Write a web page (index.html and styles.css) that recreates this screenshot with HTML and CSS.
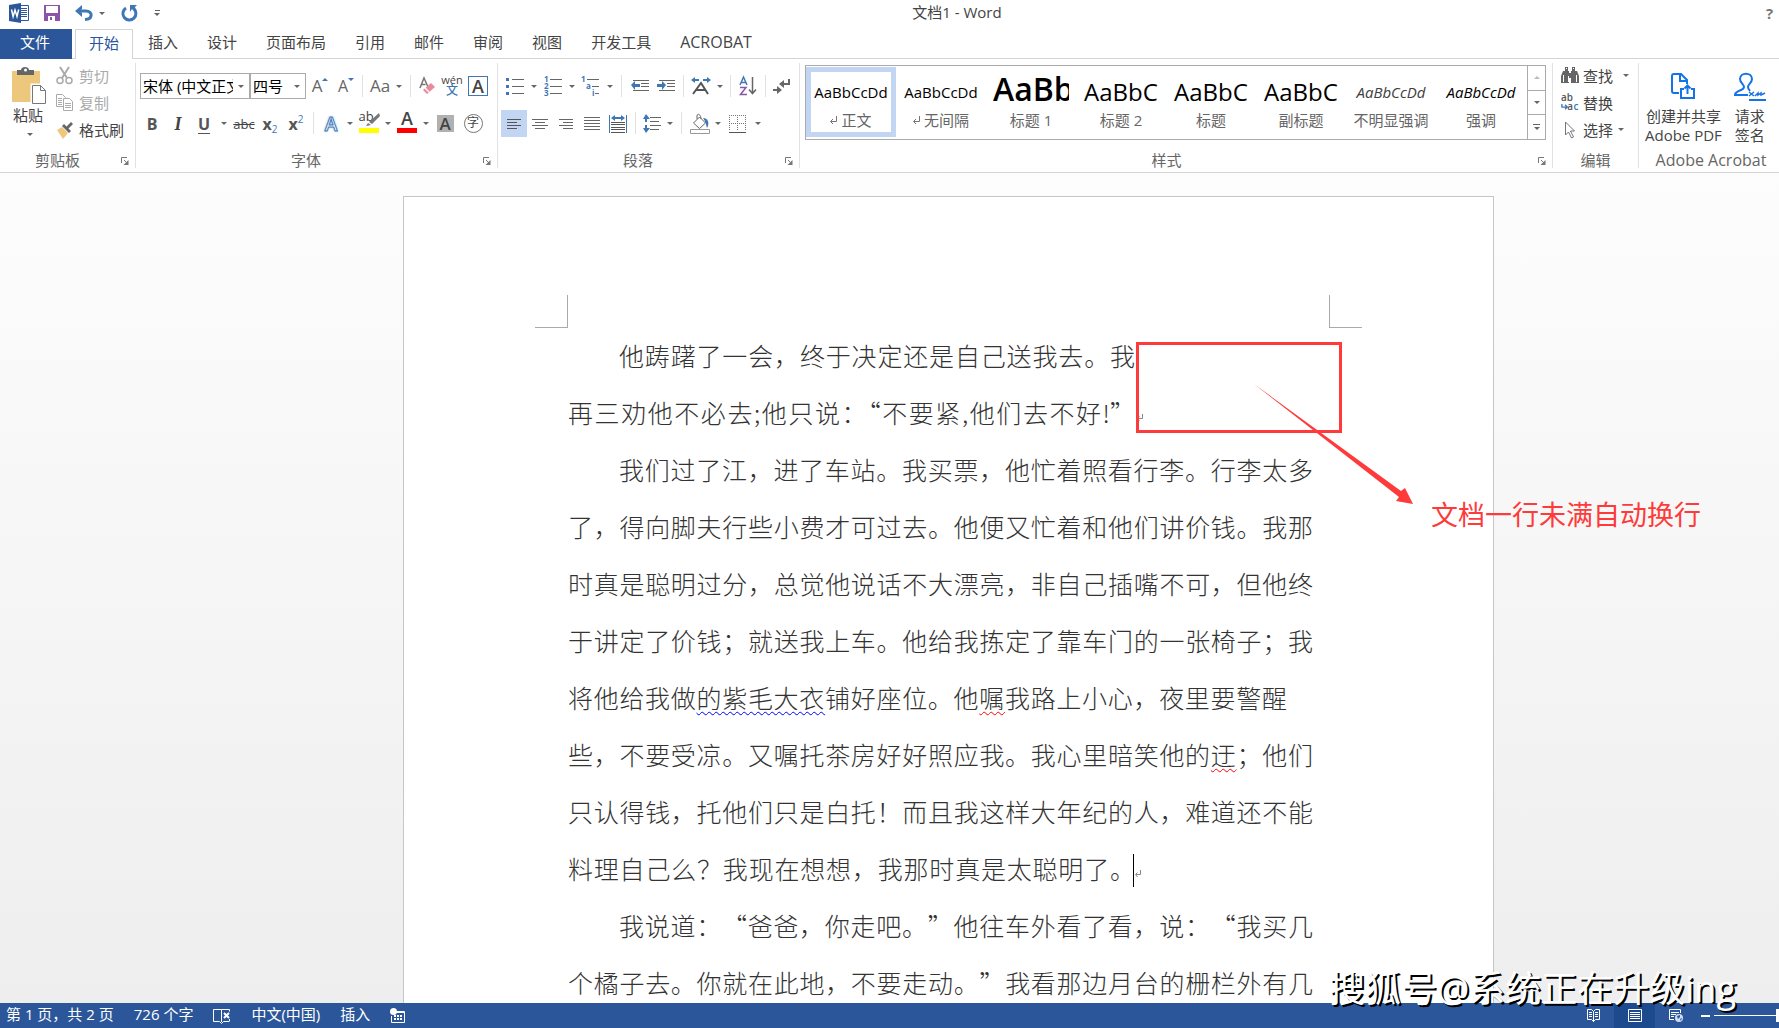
FILE: index.html
```html
<!DOCTYPE html>
<html lang="zh-CN">
<head>
<meta charset="utf-8">
<title>文档1 - Word</title>
<link rel="stylesheet" href="styles.css">
</head>
<body>
<header class="titlebar">
  <div class="quick">
    <svg class="word-logo" width="20" height="20" viewBox="0 0 20 20"><path fill="#fff" stroke="#2b579a" d="M10 2.500h9.500v15H10z"/><path stroke="#2b579a" d="M12 5.500h6M12 7.500h6M12 9.500h6M12 11.500h6M12 13.500h6"/><path fill="#2b579a" d="M0 2 12 0v20L0 18z"/><path fill="none" stroke="#fff" stroke-width="1.500" d="m2.500 6.500 1.600 7L6 7l2 6.500 1.700-7"/></svg>
    <button class="plain" aria-label="保存"><svg width="16" height="16" viewBox="0 0 16 16"><path fill="#8a55a8" d="M0 0h16v16H0z"/><path fill="#fff" d="M2 1h12v7H2zM4 11h8v5H4z"/><path fill="#8a55a8" d="M6 12h2v3H6zM11 11h1v5h-1z"/></svg></button>
    <button class="plain" aria-label="撤消"><svg width="18" height="17" viewBox="0 0 18 17"><path fill="none" stroke="#3f77b5" stroke-width="3" d="M3 6h8c7 0 7 8-1 8.500"/><path fill="#3f77b5" d="M0 6 7 0v4L5 6l2 2v4z"/></svg></button>
    <i class="arrow"></i>
    <button class="plain redo" aria-label="重复"><svg width="17" height="17" viewBox="0 0 17 17"><path fill="none" stroke="#3f77b5" stroke-width="3" d="M5 3A6.500 6.500 0 1 0 12.500 3.500"/><path fill="#3f77b5" d="M9 0h7l-2 2 1 4h-2L11 4 9 7z"/></svg></button>
    <svg width="7" height="7" viewBox="0 0 7 7"><path stroke="#666" d="M1 .500h5"/><path fill="#666" d="M0 3h6L3 6z"/></svg>
  </div>
  <h1>文档1 - Word</h1>
  <button class="plain help" aria-label="帮助">?</button>
</header>

<nav class="tabs">
  <button class="file">文件</button>
  <button class="active">开始</button>
  <button>插入</button>
  <button>设计</button>
  <button>页面布局</button>
  <button>引用</button>
  <button>邮件</button>
  <button>审阅</button>
  <button>视图</button>
  <button>开发工具</button>
  <button class="latin">ACROBAT</button>
</nav>

<section class="ribbon">
  <div class="group clipboard">
    <div class="clip-body">
      <button class="paste">
        <svg width="36" height="38" viewBox="0 0 36 38"><path fill="#edc77c" d="M0 4h28v31H0z"/><path fill="#666" d="M5 3h4c0-4 8-4 8 0h5v5H5z"/><circle cx="13.500" cy="3" r="1.500" fill="#fff"/><path fill="#fff" stroke="#fff" stroke-width="3" d="M20 18h9l5 5v14H20z"/><path fill="#fff" stroke="#777" d="M20.500 18.500h8l5 5v13h-13z"/><path fill="none" stroke="#777" d="M28.500 18.500v5h5"/></svg>
        <span>粘贴</span><i class="arrow"></i>
      </button>
      <div class="stack">
        <button class="off"><svg width="18" height="18" viewBox="0 0 18 18"><g fill="none" stroke="#aaa" stroke-width="1.500"><circle cx="4" cy="13.500" r="3"/><circle cx="13" cy="13.500" r="3"/><path stroke-width="2" d="m4 0 7 11M13 0 6 11"/></g></svg>剪切</button>
        <button class="off"><svg width="18" height="18" viewBox="0 0 18 18"><g fill="#fff" stroke="#aaa"><path d="M.500.500h6l3 3v9h-9z"/><path d="M2 4.500h4M2 6.500h4M2 8.500h4M2 10.500h4"/><path d="M7.500 4.500h6l3 3v9h-9z"/><path d="M9 9.500h6M9 11.500h6M9 13.500h6"/></g></svg>复制</button>
        <button><svg width="18" height="18" viewBox="0 0 18 18"><path fill="#edc77c" d="m1 9 5-3 6 6-5 6z"/><path fill="#666" d="m6 5 2-2 2.500 2.500L15 1l2 2-4.500 4.500L15 10l-2 2z"/></svg>格式刷</button>
      </div>
    </div>
    <footer><span>剪贴板</span><svg class="launcher" width="8" height="8" viewBox="0 0 8 8"><path fill="none" stroke="#777" d="M.500 6V.500H6M3 3l3 3"/><path fill="#777" d="M7.500 3v5h-5z"/></svg></footer>
  </div>

  <div class="group font">
    <div class="row first">
      <div class="combo w110"><select aria-label="字体"><option>宋体 (中文正文)</option></select><i class="arrow"></i></div>
      <div class="combo w56"><select aria-label="字号"><option>四号</option></select><i class="arrow"></i></div>
      <button class="w28 grow">A<svg width="6" height="4" viewBox="0 0 6 4"><path fill="#3f77b5" d="M3 0l3 3H0z"/></svg></button>
      <button class="w24 grow small">A<svg width="6" height="4" viewBox="0 0 6 4"><path fill="#3f77b5" d="M0 0h6L3 3z"/></svg></button>
      <i class="sep w8"></i>
      <button class="w28 case">Aa</button><i class="arrow w10"></i>
      <i class="sep w12"></i>
      <button class="w24" aria-label="清除格式"><svg width="18" height="20" viewBox="0 0 18 20"><path fill="none" stroke="#777" stroke-width="1.500" d="M1 12 5 2l4 9M2.500 8.500h4"/><path fill="#e98a98" d="m4 14 8-7 4 4-8 7z"/><path fill="#fff" d="m6.500 11.500 4 4 -1 1-4-4z"/></svg></button>
      <button class="w24 pinyin"><small>wén</small><b>文</b></button>
      <button class="w28"><span class="boxed">A</span></button>
    </div>
    <div class="row">
      <button class="w26 b">B</button><button class="w26 i">I</button><button class="w26 u">U</button><i class="arrow w14"></i>
      <button class="w26 strike">abc</button>
      <button class="w26 script">x<sub>2</sub></button><button class="w26 script">x<sup>2</sup></button>
      <i class="sep w8"></i>
      <button class="w28 glow">A</button><i class="arrow w10"></i>
      <button class="w28 mark yellow"><span>ab</span><svg width="16" height="14" viewBox="0 0 16 14"><path fill="#777" d="M15 0 16 3 8 11 5 9zM4 10l3 2-5 1z"/></svg></button><i class="arrow w10"></i>
      <button class="w28 mark red"><b>A</b></button><i class="arrow w10"></i>
      <button class="w28"><span class="shaded">A</span></button>
      <button class="w28"><span class="ring">字</span></button>
    </div>
    <footer><span>字体</span><svg class="launcher" width="8" height="8" viewBox="0 0 8 8"><path fill="none" stroke="#777" d="M.500 6V.500H6M3 3l3 3"/><path fill="#777" d="M7.500 3v5h-5z"/></svg></footer>
  </div>

  <div class="group para">
    <div class="row first">
      <button class="w28" aria-label="项目符号"><svg width="18" height="18" viewBox="0 0 18 18"><path fill="#3f77b5" d="M0 1h3v3H0zM0 8h3v3H0zM0 15h3v3H0z"/><path stroke="#666" d="M6 2.500h12M6 9.500h12M6 16.500h12"/></svg></button><i class="arrow w10"></i>
      <button class="w28" aria-label="编号"><svg width="18" height="20" viewBox="0 0 18 20"><g fill="#3f77b5" class="tiny"><text x="0" y="6">1</text><text x="0" y="13">2</text><text x="0" y="20">3</text></g><path stroke="#666" d="M6 3.500h12M6 10.500h12M6 17.500h12"/></svg></button><i class="arrow w10"></i>
      <button class="w28" aria-label="多级列表"><svg width="20" height="20" viewBox="0 0 20 20"><g fill="#3f77b5" class="tiny"><text x="0" y="6">1</text><text x="5" y="13">a</text><text x="11" y="20">i</text></g><path stroke="#666" d="M6 3.500h12M11 10.500h7M14 17.500h4"/></svg></button><i class="arrow w10"></i>
      <i class="sep w12"></i>
      <button class="w26" aria-label="减少缩进"><svg width="18" height="12" viewBox="0 0 18 12"><path stroke="#666" d="M2 .500h16M10 3.500h8M10 6.500h8M2 10.500h16"/><path fill="#3f77b5" d="m0 5 4-4v3h5v3H4v3z"/></svg></button>
      <button class="w26" aria-label="增加缩进"><svg width="18" height="12" viewBox="0 0 18 12"><path stroke="#666" d="M2 .500h16M10 3.500h8M10 6.500h8M2 10.500h16"/><path fill="#3f77b5" d="M9 5 5 1v3H0v3h5v3z"/></svg></button>
      <i class="sep w8"></i>
      <button class="w28" aria-label="中文版式"><svg width="20" height="18" viewBox="0 0 20 18"><path fill="#3f77b5" d="m0 3 4-3v2h4v2H4v2zM20 3l-4-3v2h-4v2h4v2z"/><path fill="none" stroke="#555" stroke-width="2" d="M2 17 10 6l7 11M5 13h10"/></svg></button><i class="arrow w10"></i>
      <i class="sep w10"></i>
      <button class="w26" aria-label="排序"><svg width="18" height="20" viewBox="0 0 18 20"><path fill="none" stroke="#3f77b5" stroke-width="1.500" d="M1 9 4.500 1 8 9M2 6.500h5"/><path fill="none" stroke="#8a55a8" stroke-width="1.500" d="M1 11.500h6L1.500 18.500H8"/><path fill="none" stroke="#666" stroke-width="1.500" d="M13.500 1v16M10 13.500l3.500 4 3.500-4"/></svg></button>
      <i class="sep w8"></i>
      <button class="w24" aria-label="显示编辑标记"><svg width="17" height="15" viewBox="0 0 17 15"><path fill="none" stroke="#666" stroke-width="2" d="M16 0v5h-5M0 11h6"/><path fill="#666" d="m6 5 5-4v8zM9 11 4 7v8z"/></svg></button>
    </div>
    <div class="row">
      <button class="w26 on" aria-label="左对齐"><svg width="14" height="12" viewBox="0 0 14 12"><path stroke="#555" d="M0 1.500h14M0 4.500h10M0 7.500h14M0 10.500h10"/></svg></button>
      <button class="w26" aria-label="居中"><svg width="16" height="12" viewBox="0 0 16 12"><path stroke="#666" d="M0 1.500h16M3 4.500h10M0 7.500h16M3 10.500h10"/></svg></button>
      <button class="w26" aria-label="右对齐"><svg width="14" height="12" viewBox="0 0 14 12"><path stroke="#666" d="M0 1.500h14M4 4.500h10M0 7.500h14M4 10.500h10"/></svg></button>
      <button class="w26" aria-label="两端对齐"><svg width="16" height="14" viewBox="0 0 16 14"><path stroke="#666" d="M0 .500h16M0 3.500h16M0 6.500h16M0 9.500h16M0 12.500h16"/></svg></button>
      <button class="w26" aria-label="分散对齐"><svg width="18" height="18" viewBox="0 0 18 18"><path stroke="#3f77b5" d="M.500 0v18M17.500 0v18"/><path fill="#3f77b5" d="m2 3 4-3v2h6V0l4 3-4 3V4H6v2z"/><path stroke="#555" d="M2 7.500h14M2 9.500h14M2 12.500h14M2 14.500h14M2 17.500h14"/></svg></button>
      <i class="sep w8"></i>
      <button class="w26" aria-label="行距"><svg width="18" height="20" viewBox="0 0 18 20"><path fill="#3f77b5" d="m3 0 4 5H4v3H2V5H0zM3 19l4-5H4v-3H2v3H0z"/><path stroke="#666" d="M7 3.500h11M7 7.500h9M7 11.500h11M7 15.500h9"/></svg></button><i class="arrow w10"></i>
      <i class="sep w12"></i>
      <button class="w26" aria-label="底纹"><svg width="20" height="20" viewBox="0 0 20 20"><path fill="#fff" stroke="#999" d="M.500 15.500h19v4H.500z"/><path fill="none" stroke="#666" d="m3.500 9 6-6 6 6-6 5.500zM7 5V2c0-3 4-2 4 3"/><path fill="#3f77b5" d="M13 4c5 0 7 5 4 10-1-3-1-6-4-10z"/></svg></button><i class="arrow w10"></i>
      <button class="w30" aria-label="边框"><svg width="18" height="18" viewBox="0 0 18 18"><path fill="none" stroke="#777" stroke-dasharray="1 1" d="M.500 0v16M8.500 0v16M16.500 0v16M0 .500h17M0 8.500h17"/><path stroke="#555" d="M0 17.500h17"/></svg></button><i class="arrow w10"></i>
    </div>
    <footer><span>段落</span><svg class="launcher" width="8" height="8" viewBox="0 0 8 8"><path fill="none" stroke="#777" d="M.500 6V.500H6M3 3l3 3"/><path fill="#777" d="M7.500 3v5h-5z"/></svg></footer>
  </div>

  <div class="group styles">
    <div class="gallery">
      <button class="chosen"><span class="sample">AaBbCcDd</span><span class="name"><svg width="7" height="8" viewBox="0 0 7 8"><path fill="none" stroke="#777" d="M6.500 0v5.500H1M3 3 .500 5.500 3 8"/></svg> 正文</span></button>
      <button><span class="sample">AaBbCcDd</span><span class="name"><svg width="7" height="8" viewBox="0 0 7 8"><path fill="none" stroke="#777" d="M6.500 0v5.500H1M3 3 .500 5.500 3 8"/></svg> 无间隔</span></button>
      <button><span class="sample h1">AaBb</span><span class="name">标题 1</span></button>
      <button><span class="sample h2">AaBbC</span><span class="name">标题 2</span></button>
      <button><span class="sample h2">AaBbC</span><span class="name">标题</span></button>
      <button><span class="sample h2">AaBbC</span><span class="name">副标题</span></button>
      <button><span class="sample em subtle">AaBbCcDd</span><span class="name">不明显强调</span></button>
      <button><span class="sample em">AaBbCcDd</span><span class="name">强调</span></button>
      <div class="scroller">
        <button aria-label="上一行"><i class="arrow up"></i></button>
        <button aria-label="下一行"><i class="arrow"></i></button>
        <button aria-label="其他"><svg width="7" height="7" viewBox="0 0 7 7"><path stroke="#666" d="M0 .500h7"/><path fill="#666" d="M1 3h6L4 6z"/></svg></button>
      </div>
    </div>
    <footer><span>样式</span><svg class="launcher" width="8" height="8" viewBox="0 0 8 8"><path fill="none" stroke="#777" d="M.500 6V.500H6M3 3l3 3"/><path fill="#777" d="M7.500 3v5h-5z"/></svg></footer>
  </div>

  <div class="group editing">
    <div class="stack">
      <button><svg width="18" height="17" viewBox="0 0 18 17"><path fill="#666" d="M4 0h3v4H4zM11 0h3v4h-3zM2 4h6v12H0V9zM10 4h6l2 5v7h-8zM8 6h2v5H8z"/><path stroke="#fff" d="M2.500 8v7M15.500 8v7M5 1.500h1M12 1.500h1M7.500 9v6"/></svg>查找<i class="arrow w18"></i></button>
      <button><svg width="20" height="18" viewBox="0 0 20 18"><g class="ab"><text x="0" y="7" fill="#555">ab</text><text x="7" y="17" fill="#555">a</text><text x="14" y="17" fill="#3f77b5">c</text></g><path fill="none" stroke="#3f77b5" stroke-width="1.500" d="M1 10v3.500h6M4.500 11 7 13.500 4.500 16"/></svg>替换</button>
      <button><svg width="18" height="18" viewBox="0 0 18 18"><path fill="#fff" stroke="#777" d="M4.500 1v13l3-3 3 6 2-1-3-6h4z"/></svg>选择<i class="arrow w8"></i></button>
    </div>
    <footer><span>编辑</span></footer>
  </div>

  <div class="group acrobat">
    <div class="acro-body">
      <button><svg width="24" height="26" viewBox="0 0 24 26"><g fill="none" stroke="#1473e6" stroke-width="2"><path d="M8 20H3a2 2 0 0 1-2-2V3a2 2 0 0 1 2-2h7l6 6v4"/><path d="M9 1v7h7M13 16h-3v9h13v-9h-3M16.500 21v-8M13.500 15.500l3-3 3 3"/></g></svg><span>创建并共享<br>Adobe PDF</span></button>
      <button><svg width="32" height="28" viewBox="0 0 32 28"><g fill="none" stroke="#1473e6" stroke-width="2"><path d="M14 22H1c0-5 9-4 9-8 0-3-4-4-4-8 0-7 12-7 12 0 0 4-4 5-4 8 0 2 1 3 2 4M15 27h17"/><path stroke-width="1.500" d="m15 19 5 4m0-4-5 4M21 23l3-3v2l3-2v2l4-2"/></g></svg><span>请求<br>签名</span></button>
    </div>
    <footer><span>Adobe Acrobat</span></footer>
  </div>
</section>

<main class="canvas">
  <article class="page">
    <i class="crop left"></i><i class="crop right"></i>
    <p>
      <span class="line indent w22c">他踌躇了一会，终于决定还是自己送我去。我</span>
      <span class="line w22c trim">再三劝他不必去;他只说：“不要紧,他们去不好!”</span><svg class="mark-end" width="6" height="8" viewBox="0 0 6 8"><path fill="none" stroke="#888" d="M5.500 0v4.500H1M2.500 2.500.500 4.500 2.500 7"/></svg>
    </p>
    <p>
      <span class="line indent">我们过了江，进了车站。我买票，他忙着照看行李。行李太多</span>
      <span class="line">了，得向脚夫行些小费才可过去。他便又忙着和他们讲价钱。我那</span>
      <span class="line">时真是聪明过分，总觉他说话不大漂亮，非自己插嘴不可，但他终</span>
      <span class="line">于讲定了价钱；就送我上车。他给我拣定了靠车门的一张椅子；我</span>
      <span class="line w28c">将他给我做<u class="grammar">的紫毛大衣</u>铺好座位。他<u class="spelling">嘱</u>我路上小心，夜里要警醒</span>
      <span class="line">些，不要受凉。又嘱托茶房好好照应我。我心里暗笑他的<u class="spelling">迂</u>；他们</span>
      <span class="line">只认得钱，托他们只是白托！而且我这样大年纪的人，难道还不能</span>
      <span class="line w22c">料理自己么？我现在想想，我那时真是太聪明了。</span><i class="caret"></i><svg class="mark-end" width="6" height="8" viewBox="0 0 6 8"><path fill="none" stroke="#888" d="M5.500 0v4.500H1M2.500 2.500.500 4.500 2.500 7"/></svg>
    </p>
    <p>
      <span class="line indent">我说道：“爸爸，你走吧。”他往车外看了看，说：“我买几</span>
      <span class="line">个橘子去。你就在此地，不要走动。”我看那边月台的栅栏外有几</span>
    </p>
    <div class="callout"></div>
    <svg class="pointer" width="160" height="120" viewBox="0 0 160 120"><path fill="#ff3a3a" d="m0 0 147 107 4-3 8 16-17-3 3-4z"/></svg>
    <div class="note">文档一行未满自动换行</div>
  </article>
</main>

<footer class="status">
  <span>第 1 页，共 2 页</span>
  <span>726 个字</span>
  <svg width="18" height="16" viewBox="0 0 18 16"><path fill="none" stroke="#fff" d="M8.500 14V1.500h-8v12h6l2 2 2-2h6M8.500 1.500h8v2M16.500 11v2"/><path stroke="#fff" stroke-width="2" d="m11 5 5 5m0-5-5 5"/></svg>
  <span>中文(中国)</span>
  <span>插入</span>
  <svg width="15" height="16" viewBox="0 0 15 16"><path fill="none" stroke="#fff" d="M4 3.500h10.500v11H1.500V8"/><path stroke="#fff" stroke-width="2" stroke-dasharray="2 1" d="M4 8h9M4 11h9"/><path fill="#fff" d="M6 3h8v2H6z"/><circle cx="3.500" cy="3.500" r="3.500" fill="#fff"/></svg>
  <div class="views">
    <button aria-label="阅读视图"><svg width="13" height="13" viewBox="0 0 13 13"><path fill="none" stroke="#fff" d="M6.500 13V2.500l-2-2h-4v10h4l2 2 2-2h4V.500h-4l-2 2M2 3.500h3M2 5.500h3M2 7.500h3M8 3.500h3M8 5.500h3M8 7.500h3"/></svg></button>
    <button class="current" aria-label="页面视图"><svg width="14" height="13" viewBox="0 0 14 13"><path fill="none" stroke="#fff" d="M.500.500h13v12H.500zM2 3.500h10M2 5.500h10M2 7.500h10M2 9.500h10"/></svg></button>
    <button aria-label="Web 版式视图"><svg width="14" height="13" viewBox="0 0 14 13"><path fill="none" stroke="#fff" d="M5 10.500H.500V.500h11V4M2 3.500h8M2 5.500h5M2 7.500h3"/><circle cx="10" cy="9" r="4" fill="#cfdcf0"/><path fill="#2b579a" d="m8 7 3-1v2l-2 2zM11 10l2-1-1 3z"/></svg></button>
  </div>
  <div class="zoom"><i class="minus"></i><i class="track"></i><i class="thumb"></i></div>
  <div class="watermark">搜狐号@系统正在升级ing</div>
</footer>
</body>
</html>
```
FILE: styles.css
```css
* { box-sizing: border-box; }
body {
  margin: 0; height: 100vh; overflow: hidden;
  display: flex; flex-direction: column;
  background: #fff; color: #444;
  font: 15px/20px "Open Sans", "Noto Sans CJK SC", sans-serif;
}
button {
  border: 0; padding: 0; background: none; color: inherit; font: inherit;
  display: flex; align-items: center; justify-content: center; white-space: nowrap;
}
svg { display: block; flex: none; overflow: visible; }

.arrow { flex: none; display: flex; align-items: center; justify-content: center; }
.arrow::before { content: ""; border: 3px solid transparent; border-top-color: #666; border-bottom: 0; }
.arrow.up::before { border-top: 0; border-bottom: 3px solid #bbb; }

.w8 { width: 8px; }
.w10 { width: 10px; }
.w12 { width: 12px; }
.w14 { width: 14px; }
.w18 { width: 18px; }
.w24 { width: 24px; }
.w26 { width: 26px; }
.w28 { width: 28px; }
.w30 { width: 30px; }
.w56 { width: 56px; }
.w110 { width: 110px; }

/* Title bar */
.titlebar { display: flex; flex: none; height: 29px; align-items: flex-start; }
.quick { display: flex; align-items: center; width: 170px; padding-left: 9px; height: 26px; }
.quick .plain { margin-left: 15px; }
.quick .arrow { width: 18px; }
.quick .redo { margin: 0 16px 0 10px; }
.titlebar h1 { flex: 1; margin: 0; font-size: 15px; font-weight: 400; text-align: center; line-height: 25px; }
.help { width: 35px; height: 25px; padding-left: 16px; font-weight: 700; color: #777; }

/* Tabs */
.tabs { display: flex; flex: none; height: 30px; gap: 1px; border-bottom: 1px solid #d4d4d4; }
.tabs button { height: 29px; padding: 0 14px 4px; }
.tabs .file { width: 72px; height: 30px; padding: 0 16px 4px 14px; margin-right: 2px; background: #2b579a; color: #fff; }
.tabs .active { height: 30px; padding: 0 13px 4px; border: 1px solid #d4d4d4; border-bottom: 0; background: #fff; color: #2b579a; }
.tabs .latin { font-size: 16px; }

/* Ribbon */
.ribbon { display: flex; flex: none; height: 114px; padding: 4px 0; border-bottom: 1px solid #d4d4d4; }
.group { display: flex; flex-direction: column; flex: none; border-right: 1px solid #e1e1e1; }
.group footer { display: flex; align-items: center; margin-top: auto; height: 16px; line-height: 16px; color: #666; }
.group footer span { flex: 1; text-align: center; }
.launcher { margin: 2px 6px 0; }
.clipboard { width: 136px; }
.font { width: 362px; padding-left: 3px; }
.font footer, .para footer, .styles footer { margin-left: -4px; }
.para { width: 302px; padding-left: 3px; }
.styles { flex: 1 0 753px; padding-left: 5px; }
.editing { width: 86px; }
.acrobat { width: 140px; border-right: 0; }

.clip-body { display: flex; }
.paste { flex-direction: column; width: 56px; padding: 4px 0 0 3px; justify-content: flex-start; }
.paste span { margin-right: 3px; }
.paste .arrow { height: 18px; }
.stack button { height: 27px; gap: 4px; padding-bottom: 2px; justify-content: flex-start; }
.clip-body .stack svg { margin-right: 1px; }
.off { color: #aaa; }

.row { display: flex; height: 27px; }
.row.first { height: 26px; margin: 10px 0 11px; }
.font .row.first { padding-left: 1px; }
.sep { flex: none; display: flex; justify-content: center; }
.sep::before { content: ""; width: 1px; height: 22px; margin-top: 2px; background: #e1e1e1; }
.combo { display: flex; border: 1px solid #ababab; overflow: hidden; }
.combo select {
  flex: 1; min-width: 0; appearance: none; border: 0; padding: 0 0 0 2px; margin: 0;
  background: none; color: #000; font: inherit; text-overflow: clip;
}
.combo .arrow { width: 16px; }

.grow { font-size: 17px; align-items: center; color: #666; }
.grow svg { align-self: flex-start; margin-top: 5px; }
.small { font-size: 16px; }
.case { font-size: 17px; color: #666; }
.pinyin { flex-direction: column; }
.pinyin small { font-size: 11px; line-height: 9px; }
.pinyin b { font-size: 12px; line-height: 13px; color: #3f77b5; font-weight: 500; }
.boxed { width: 20px; height: 20px; border: 1px solid #3f77b5; font-weight: 600; font-size: 18px; line-height: 18px; }
.b, .u, .script { font-weight: 700; font-size: 16px; color: #555; }
.i { font: italic 700 18px/20px "Liberation Serif", serif; }
.u { text-decoration: underline; text-underline-offset: 3px; }
.strike { font-size: 13px; text-decoration: line-through; }
.script sub, .script sup { font-size: 10px; line-height: 10px; font-weight: 400; color: #3f77b5; }
.script sub { margin-top: 10px; }
.script sup { margin-bottom: 10px; }
.glow { font-size: 19px; font-weight: 600; color: #fff; -webkit-text-stroke: 1px #3f77b5; text-shadow: 0 0 3px #7fb0e6; }
.mark { position: relative; align-items: flex-start; line-height: 14px; }
.mark::after { content: ""; position: absolute; left: 4px; bottom: 4px; width: 20px; height: 5px; background: #ff0; }
.mark span { font-size: 13px; line-height: 12px; margin-right: -10px; }
.mark svg { margin-top: 3px; }
.mark b { font-size: 18px; line-height: 16px; font-weight: 600; }
.red::after { background: #f00; }
.shaded { width: 17px; height: 17px; background: #b1b1b1; font-weight: 600; font-size: 17px; line-height: 17px; }
.ring { width: 19px; height: 19px; border: 1px solid #777; border-radius: 50%; font-size: 12px; line-height: 16px; }
.on { background: #c2d5f2; }
.tiny { font: 700 8px "Open Sans", sans-serif; }
.ab { font: 600 11px "Open Sans", sans-serif; }

/* Style gallery */
.gallery { display: flex; height: 75px; margin: 2px 6px 0 0; padding: 1px 0 1px; border: 1px solid #ababab; }
.gallery > button { width: 90px; height: 70px; flex-direction: column; border: 5px solid transparent; }
.gallery > .chosen { border-color: #c2d5f2; }
.sample { width: 76px; height: 36px; line-height: 40px; overflow: hidden; color: #000; text-align: center; }
.sample.h1 { font-size: 32px; font-weight: 600; line-height: 34px; text-align: left; }
.sample.h2 { font-size: 24px; line-height: 40px; }
.sample.em { font-style: italic; }
.sample.subtle { color: #404040; }
.name { display: flex; align-items: center; gap: 4px; height: 24px; color: #666; }
.scroller { display: flex; flex-direction: column; width: 18px; margin: -1px 0 -1px auto; border-left: 1px solid #ababab; }
.scroller button { flex: 1; }
.scroller button + button { border-top: 1px solid #ababab; }

.editing .stack { padding-left: 8px; }
.editing .stack svg { width: 18px; }

.acro-body { display: flex; padding: 10px 0 0 6px; gap: 12px; }
.acro-body button { flex-direction: column; justify-content: space-between; height: 72px; min-width: 32px; line-height: 19px; }

.acrobat footer { padding-left: 4px; font-size: 16px; }
.acro-body span { font-size: 15px; }

/* Document */
.canvas { flex: 1; min-height: 0; overflow: hidden; padding: 23px 0 0 403px; background: linear-gradient(#fdfdfd, #eee); }
.page {
  position: relative; width: 1091px; min-height: 100%; padding: 130px 164px 0;
  border: 1px solid #c6c6c6; background: #fff; color: #333;
}
.page p { margin: 0; font: 300 25px/57px "Noto Sans CJK SC", sans-serif; text-spacing-trim: space-all; }
.line { display: inline-block; vertical-align: top; width: 745px; text-align: justify; text-align-last: justify; white-space: nowrap; }
.indent { padding-left: 51px; }
.w22c { width: 567px; }
.w28c { width: 719px; }
.trim { text-spacing-trim: normal; }
.mark-end { display: inline-block; margin-left: 2px; vertical-align: top; margin-top: 30px; }
.caret { display: inline-block; width: 1px; height: 33px; margin: 14px 0 0 -2px; vertical-align: top; background: #000; }
.caret + .mark-end { margin-left: 1px; }
.grammar, .spelling { text-decoration: underline wavy 1px; text-underline-offset: 3px; text-decoration-skip-ink: none; }
.grammar { text-decoration-color: #00f; }
.spelling { text-decoration-color: #f00; }

.crop { position: absolute; top: 98px; width: 33px; height: 33px; border-bottom: 1px solid #aaa; }
.crop.left { left: 131px; border-right: 1px solid #aaa; }
.crop.right { right: 131px; border-left: 1px solid #aaa; }

.callout { position: absolute; left: 732px; top: 145px; width: 206px; height: 91px; border: 3px solid #ff3a3a; }
.pointer { position: absolute; left: 850px; top: 187px; }
.note { position: absolute; left: 1027px; top: 298px; font: 27px/38px "Noto Sans CJK SC", sans-serif; white-space: nowrap; color: #ff3a3a; }

/* Status bar */
.status { position: relative; display: flex; flex: none; align-items: center; gap: 20px; height: 25px; padding-left: 6px; background: #2b579a; color: #fff; }
.status > span { padding-bottom: 3px; }
.views { display: flex; margin-left: auto; height: 25px; }
.views button { width: 41px; }
.views .current { background: #1c4a8c; }
.zoom { display: flex; align-items: center; gap: 4px; margin-left: -15px; }
.minus { width: 9px; height: 2px; background: #fff; }
.track { width: 62px; height: 1px; background: #fff; }
.thumb { width: 3px; height: 13px; margin-left: -4px; background: #fff; }
.watermark {
  position: absolute; right: 43px; bottom: 14px; font: 36px/50px "Open Sans", "Noto Sans CJK SC", sans-serif;
  white-space: nowrap; color: #fff; text-shadow: 2px 2px 0 #000;
}
```
